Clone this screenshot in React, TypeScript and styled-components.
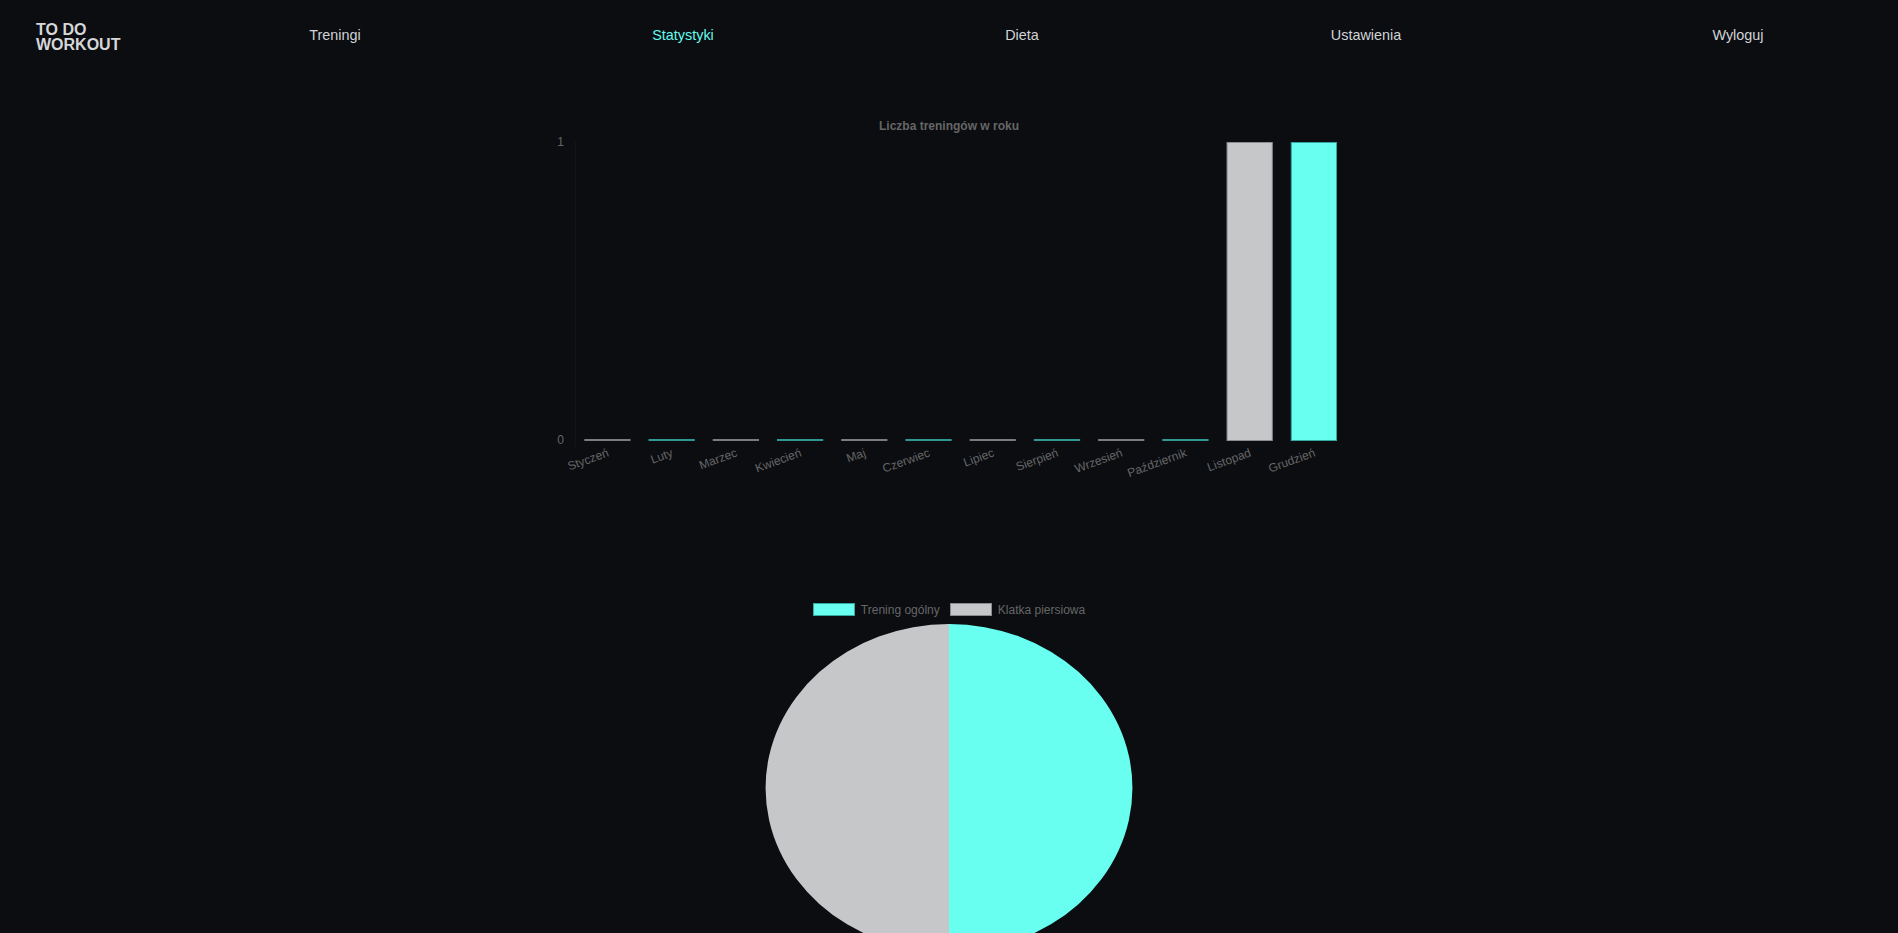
import React from "react";
import styled, { createGlobalStyle } from "styled-components";

const GlobalStyle = createGlobalStyle`
  html, body {
    margin: 0;
    padding: 0;
    background: #0b0d11;
  }
  body {
    font-family: "Liberation Sans", Arial, sans-serif;
    overflow: hidden;
  }
`;

const Page = styled.div`
  min-height: 933px;
  background: #0b0d11;
  color: #d1d3d6;
`;

const Header = styled.header`
  height: 70px;
  display: flex;
  align-items: center;
  padding-left: 36px;
`;

const Logo = styled.div`
  width: 124px;
  font-size: 16px;
  font-weight: 700;
  line-height: 15px;
  color: #d6d7d9;
  padding-top: 3px;
`;

const NavList = styled.nav`
  display: flex;
  align-items: center;
`;

const NavItem = styled.a<{ $w: number; $ml?: number; $active?: boolean }>`
  width: ${(p) => p.$w}px;
  margin-left: ${(p) => p.$ml ?? 0}px;
  text-align: center;
  font-size: 14.4px;
  color: ${(p) => (p.$active ? "#66f9ec" : "#d1d3d6")};
  text-decoration: none;
  cursor: pointer;
`;

const Main = styled.main`
  display: flex;
  flex-direction: column;
  align-items: center;
`;

const BarSvg = styled.svg`
  display: block;
  margin-top: 20px;
  font-family: "Liberation Sans", Arial, sans-serif;
`;

const PieSection = styled.section`
  margin-top: 113px;
  display: flex;
  flex-direction: column;
  align-items: center;
`;

const Legend = styled.div`
  display: flex;
  align-items: center;
  gap: 10px;
  height: 13px;
`;

const LegendItem = styled.div`
  display: flex;
  align-items: center;
  gap: 6px;
  font-size: 12px;
  color: #666;
`;

const Swatch = styled.span<{ $fill: string; $border: string }>`
  display: inline-block;
  width: 40px;
  height: 11px;
  background: ${(p) => p.$fill};
  border: 1px solid ${(p) => p.$border};
`;

const PieSvg = styled.svg`
  display: block;
  margin-top: 8px;
`;

const GRAY = "#c6c7c9";
const GRAY_B = "#8a8b8d";
const CYAN = "#69fff0";
const CYAN_B = "#35a79e";

const months = [
  "Styczeń",
  "Luty",
  "Marzec",
  "Kwiecień",
  "Maj",
  "Czerwiec",
  "Lipiec",
  "Sierpień",
  "Wrzesień",
  "Październik",
  "Listopad",
  "Grudzień",
];
const values = [0, 0, 0, 0, 0, 0, 0, 0, 0, 0, 1, 1];

const W = 820;
const H = 400;
const PL = 36.3;
const PR = 807;
const PT = 52;
const PB = 351;
const CW = (PR - PL) / 12;
const BW = CW * 0.72;

function BarChart() {
  return (
    <BarSvg width={W} height={H} viewBox={`0 0 ${W} ${H}`}>
      <text x={W / 2} y={40} textAnchor="middle" fontSize="12" fontWeight="700" fill="#666">
        Liczba treningów w roku
      </text>
      <line x1={PL} y1={PT} x2={PL} y2={PB + 6} stroke="#15171b" strokeWidth="1" />
      <text x={25} y={PT + 4} textAnchor="end" fontSize="12" fill="#666">
        1
      </text>
      <text x={25} y={PB + 3} textAnchor="end" fontSize="12" fill="#666">
        0
      </text>
      {months.map((m, i) => {
        const cx = PL + CW * (i + 0.5);
        const even = i % 2 === 0;
        const fill = even ? GRAY : CYAN;
        const border = even ? GRAY_B : CYAN_B;
        const zeroCol = even ? "#7b7c7e" : "#2f9990";
        return (
          <g key={m}>
            {values[i] > 0 ? (
              <rect
                x={cx - BW / 2 + 0.5}
                y={PT + 0.5}
                width={BW - 1}
                height={PB - PT - 1}
                fill={fill}
                stroke={border}
                strokeWidth="1"
              />
            ) : (
              <rect x={cx - BW / 2} y={PB - 2} width={BW} height={2} fill={zeroCol} />
            )}
            <text
              x={cx + 1}
              y={PB + 12}
              textAnchor="end"
              fontSize="12"
              fill="#666"
              transform={`rotate(-20 ${cx + 1} ${PB + 12})`}
              dominantBaseline="middle"
            >
              {m}
            </text>
          </g>
        );
      })}
    </BarSvg>
  );
}

function PieChart() {
  const rx = 183.5;
  const ry = 164;
  const w = 368;
  const h = 340;
  const cx = w / 2;
  const cy = ry;
  return (
    <PieSvg width={w} height={h} viewBox={`0 0 ${w} ${h}`}>
      <path
        d={`M ${cx} ${cy - ry} A ${rx} ${ry} 0 0 1 ${cx} ${cy + ry} Z`}
        fill={CYAN}
      />
      <path
        d={`M ${cx} ${cy - ry} A ${rx} ${ry} 0 0 0 ${cx} ${cy + ry} Z`}
        fill={GRAY}
      />
    </PieSvg>
  );
}

export default function App() {
  return (
    <Page>
      <GlobalStyle />
      <Header>
        <Logo>
          TO DO
          <br />
          WORKOUT
        </Logo>
        <NavList>
          <NavItem $w={350}>Treningi</NavItem>
          <NavItem $w={346} $active>
            Statystyki
          </NavItem>
          <NavItem $w={332}>Dieta</NavItem>
          <NavItem $w={356}>Ustawienia</NavItem>
          <NavItem $w={200} $ml={94}>
            Wyloguj
          </NavItem>
        </NavList>
      </Header>
      <Main>
        <BarChart />
        <PieSection>
          <Legend>
            <LegendItem>
              <Swatch $fill={CYAN} $border={CYAN_B} />
              Trening ogólny
            </LegendItem>
            <LegendItem>
              <Swatch $fill={GRAY} $border={GRAY_B} />
              Klatka piersiowa
            </LegendItem>
          </Legend>
          <PieChart />
        </PieSection>
      </Main>
    </Page>
  );
}
